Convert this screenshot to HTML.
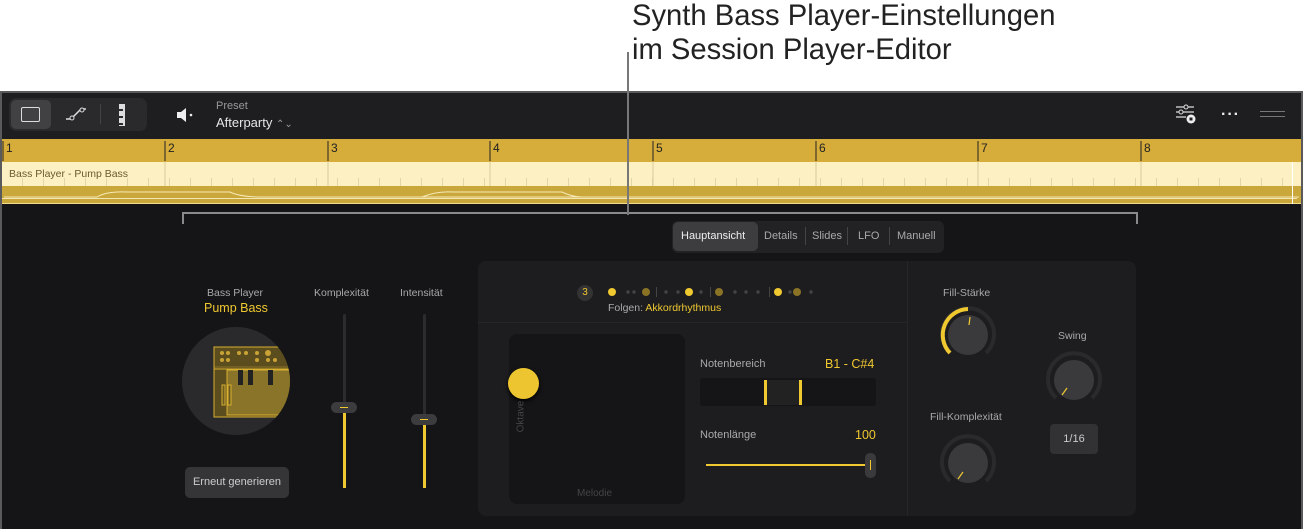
<!DOCTYPE html>
<html><head><meta charset="utf-8"><style>
*{margin:0;padding:0;box-sizing:border-box}
body{width:1303px;height:529px;background:#fff;position:relative;overflow:hidden;font-family:"Liberation Sans",sans-serif}
.a{position:absolute}
.t{color:#a9a9ab;font-size:11px}
.y{color:#f0c830}
</style></head><body>
<div class="a" style="left:632px;top:-1px;font-size:29.2px;line-height:34px;color:#222">Synth Bass Player-Einstellungen<br>im Session Player-Editor</div>
<div class="a" style="left:627px;top:52px;width:2px;height:163px;background:#777;z-index:5"></div>

<div class="a" style="left:0;top:91px;width:1303px;height:438px;background:#151517;border:2px solid #5a5a5c;border-bottom:none"></div>
<!-- toolbar -->
<div class="a" style="left:2px;top:93px;width:1299px;height:46px;background:#1e1e20"></div>
<div class="a" style="left:9px;top:98px;width:138px;height:33px;background:#2a2a2c;border-radius:7px"></div>
<div class="a" style="left:11px;top:100px;width:40px;height:29px;background:#414144;border-radius:5px"></div>
<div class="a" style="left:21px;top:107px;width:19px;height:15px;border:1.5px solid #ddd;border-radius:2px"></div>
<svg class="a" style="left:63px;top:104px" width="28" height="20"><path d="M3 15h5l10-10h5" stroke="#ddd" stroke-width="1.5" fill="none"/><circle cx="9" cy="14" r="2" fill="#2a2a2c" stroke="#ddd"/><circle cx="19" cy="6" r="2" fill="#2a2a2c" stroke="#ddd"/></svg>
<div class="a" style="left:100px;top:104px;width:1px;height:20px;background:#444"></div>
<div class="a" style="left:119px;top:104px;width:6px;height:22px;border-right:2px solid #ddd;background:repeating-linear-gradient(#ddd 0 5px,transparent 5px 7px)"></div>
<svg class="a" style="left:175px;top:106px" width="20" height="18"><path d="M2 6h4l5-4v14l-5-4H2z" fill="#eee"/><circle cx="16" cy="9" r="1.3" fill="#eee"/></svg>
<div class="a t" style="left:216px;top:100px;font-size:11px;color:#999">Preset</div>
<div class="a" style="left:216px;top:115px;font-size:13px;color:#e6e6e6">Afterparty <span style="font-size:10px;color:#999">⌃⌄</span></div>
<svg class="a" style="left:1174px;top:104px" width="24" height="20"><path d="M2 3h18M2 8h18M2 13h10" stroke="#ddd" stroke-width="1.3"/><circle cx="12" cy="3" r="2" fill="#1e1e20" stroke="#ddd"/><circle cx="7" cy="8" r="2" fill="#1e1e20" stroke="#ddd"/><circle cx="17" cy="15" r="4.5" fill="#eee"/><rect x="15.5" y="13.5" width="3" height="3" fill="#1e1e20"/></svg>
<div class="a" style="left:1221px;top:106px;color:#eee;font-size:16px;letter-spacing:1px;font-weight:bold">···</div>
<div class="a" style="left:1260px;top:111px;width:25px;height:6px;border-top:1px solid #777;border-bottom:1px solid #777"></div>
<!-- ruler -->
<div class="a" style="left:2px;top:139px;width:1299px;height:23px;background:#d6ad3a"></div>
<div class="a" style="left:2px;top:162px;width:1299px;height:24px;background:#fdf1c4"></div>
<div class="a" style="left:2px;top:186px;width:1299px;height:18px;background:#c9a73b;border-bottom:1px solid #f0dc8a"></div>
<div class="a" style="left:9px;top:168px;font-size:10.5px;color:#6b5a2a">Bass Player - Pump Bass</div>
<div class="a" style="left:2px;top:178px;width:1295px;height:8px;background:repeating-linear-gradient(90deg,transparent 0 20px,#e3d7a8 20px 21px)"></div>
<div class="a" style="left:2px;top:198px;width:1295px;height:1px;background:#f3e6b0"></div>
<svg class="a" style="left:2px;top:139px" width="1299" height="66">
<g stroke="#222" stroke-width="1">
<line x1="1" y1="2" x2="1" y2="22"/><line x1="163" y1="2" x2="163" y2="22"/><line x1="326" y1="2" x2="326" y2="22"/><line x1="488" y1="2" x2="488" y2="22"/><line x1="651" y1="2" x2="651" y2="22"/><line x1="814" y1="2" x2="814" y2="22"/><line x1="976" y1="2" x2="976" y2="22"/><line x1="1139" y1="2" x2="1139" y2="22"/></g>
<g stroke="#d8cb9a" stroke-width="1"><line x1="163" y1="23" x2="163" y2="47"/><line x1="326" y1="23" x2="326" y2="47"/><line x1="488" y1="23" x2="488" y2="47"/><line x1="651" y1="23" x2="651" y2="47"/><line x1="814" y1="23" x2="814" y2="47"/><line x1="976" y1="23" x2="976" y2="47"/><line x1="1139" y1="23" x2="1139" y2="47"/></g>
<g font-size="12" fill="#222"><text x="4" y="13">1</text><text x="166" y="13">2</text><text x="329" y="13">3</text><text x="491" y="13">4</text><text x="654" y="13">5</text><text x="817" y="13">6</text><text x="979" y="13">7</text><text x="1142" y="13">8</text></g>
<path d="M2 58H95Q105 52 125 53H228Q238 58 260 58H1297" stroke="#f6e9b5" fill="none"/>
<path d="M328 58H420Q435 52 450 53H560Q570 58 580 58" stroke="#f6e9b5" fill="none"/>
</svg>
<div class="a" style="left:1292px;top:162px;width:10px;height:42px;border-left:1px solid #fff"></div>
<!-- bracket -->
<div class="a" style="left:182px;top:212px;width:956px;height:12px;border:2px solid #8a8a8c;border-bottom:none"></div>
<!-- tabs -->
<div class="a" style="left:672px;top:221px;width:272px;height:32px;background:#222224;border-radius:6px"></div>
<div class="a" style="left:673px;top:222px;width:85px;height:29px;background:#3d3d40;border-radius:5px"></div>
<div class="a" style="left:681px;top:230px;font-size:11px;color:#eee">Hauptansicht</div>
<div class="a t" style="left:764px;top:230px">Details</div>
<div class="a t" style="left:812px;top:230px">Slides</div>
<div class="a t" style="left:858px;top:230px">LFO</div>
<div class="a t" style="left:897px;top:230px">Manuell</div>
<div class="a" style="left:805px;top:227px;width:1px;height:18px;background:#444"></div>
<div class="a" style="left:847px;top:227px;width:1px;height:18px;background:#444"></div>
<div class="a" style="left:889px;top:227px;width:1px;height:18px;background:#444"></div>
<!-- left section -->
<div class="a t" style="left:207px;top:287px;font-size:10.5px">Bass Player</div>
<div class="a y" style="left:204px;top:301px;font-size:12.5px">Pump Bass</div>
<div class="a" style="left:182px;top:327px;width:108px;height:108px;border-radius:50%;background:#2a2a2c;overflow:hidden">
<svg width="108" height="108"><g stroke="#d8b030" fill="#6b5a20"><rect x="32" y="20" width="80" height="70" fill="#5b4d1e"/><line x1="32" y1="40" x2="112" y2="40" stroke-opacity=".4"/><line x1="32" y1="42" x2="112" y2="42"/><rect x="45" y="43" width="70" height="45" fill="#8a742a"/><rect x="40" y="58" width="3" height="20"/><rect x="46" y="58" width="3" height="20"/></g>
<g fill="#c9a335"><circle cx="40" cy="26" r="2"/><circle cx="46" cy="26" r="2"/><circle cx="40" cy="33" r="2"/><circle cx="46" cy="33" r="2"/><circle cx="57" cy="26" r="2"/><circle cx="64" cy="26" r="2"/><circle cx="75" cy="26" r="2"/><circle cx="86" cy="26" r="3"/><circle cx="75" cy="33" r="2"/><circle cx="86" cy="33" r="2"/><circle cx="93" cy="33" r="2"/></g>
<g fill="#222"><rect x="56" y="43" width="5" height="15"/><rect x="66" y="43" width="5" height="15"/><rect x="86" y="43" width="5" height="15"/></g></svg></div>
<div class="a" style="left:185px;top:467px;width:104px;height:31px;background:#353537;border-radius:5px;color:#ccc;font-size:11px;text-align:center;line-height:31px">Erneut generieren</div>
<div class="a t" style="left:314px;top:287px;font-size:10.5px">Komplexität</div>
<div class="a t" style="left:400px;top:287px;font-size:10.5px">Intensität</div>
<div class="a" style="left:343px;top:314px;width:3px;height:174px;background:#2c2c2e;border-radius:2px"></div>
<div class="a" style="left:343px;top:408px;width:3px;height:80px;background:#f0c830"></div>
<div class="a" style="left:331px;top:402px;width:26px;height:11px;background:#3c3c3e;border-radius:6px"></div>
<div class="a" style="left:340px;top:407px;width:8px;height:1px;background:#f0c830"></div>
<div class="a" style="left:423px;top:314px;width:3px;height:174px;background:#2c2c2e;border-radius:2px"></div>
<div class="a" style="left:423px;top:420px;width:3px;height:68px;background:#f0c830"></div>
<div class="a" style="left:411px;top:414px;width:26px;height:11px;background:#3c3c3e;border-radius:6px"></div>
<div class="a" style="left:420px;top:419px;width:8px;height:1px;background:#f0c830"></div>
<!-- middle panel -->
<div class="a" style="left:478px;top:261px;width:658px;height:255px;background:#1d1d1f;border-radius:8px"></div>
<div class="a" style="left:478px;top:322px;width:429px;height:1px;background:#262628"></div>
<div class="a" style="left:907px;top:261px;width:1px;height:255px;background:#262628"></div>
<div class="a" style="left:577px;top:285px;width:16px;height:16px;border-radius:50%;background:#333;color:#f0c830;font-size:10px;text-align:center;line-height:16px">3</div>
<svg class="a" style="left:605px;top:286px" width="210" height="14"><g fill="#f0c830"><circle cx="7" cy="6" r="4"/><circle cx="84" cy="6" r="4"/><circle cx="173" cy="6" r="4"/></g><g fill="#8a7325"><circle cx="41" cy="6" r="4"/><circle cx="114" cy="6" r="4"/><circle cx="192" cy="6" r="4"/></g><g fill="#444"><circle cx="23" cy="6" r="1.7"/><circle cx="29" cy="6" r="1.7"/><circle cx="61" cy="6" r="1.7"/><circle cx="73" cy="6" r="1.7"/><circle cx="96" cy="6" r="1.7"/><circle cx="130" cy="6" r="1.7"/><circle cx="141" cy="6" r="1.7"/><circle cx="153" cy="6" r="1.7"/><circle cx="185" cy="6" r="1.7"/><circle cx="206" cy="6" r="1.7"/><rect x="51" y="1" width="1" height="10"/><rect x="105" y="1" width="1" height="10"/><rect x="164" y="1" width="1" height="10"/></g></svg>
<div class="a" style="left:608px;top:302px;font-size:10.5px;color:#aaa">Folgen: <span class="y">Akkordrhythmus</span></div>
<div class="a" style="left:509px;top:334px;width:176px;height:170px;background:#151517;border-radius:8px"></div>
<div class="a" style="left:508px;top:368px;width:31px;height:31px;border-radius:50%;background:#edc530;box-shadow:0 2px 4px #000"></div>
<div class="a" style="left:505px;top:411px;font-size:10px;color:#444;transform:rotate(-90deg)">Oktave</div>
<div class="a" style="left:577px;top:488px;font-size:10px;color:#444">Melodie</div>
<div class="a t" style="left:700px;top:358px">Notenbereich</div>
<div class="a y" style="left:825px;top:357px;font-size:12.5px">B1 - C#4</div>
<div class="a" style="left:700px;top:378px;width:176px;height:28px;background:#151517;border-radius:3px"></div>
<div class="a" style="left:764px;top:380px;width:38px;height:25px;background:#222;border-left:3px solid #f0c830;border-right:3px solid #f0c830"></div>
<div class="a t" style="left:700px;top:429px">Notenlänge</div>
<div class="a y" style="left:855px;top:428px;font-size:12.5px">100</div>
<div class="a" style="left:706px;top:464px;width:164px;height:2px;background:#f0c830"></div>
<div class="a" style="left:865px;top:453px;width:11px;height:25px;background:#3a3a3c;border-radius:5px"></div>
<div class="a" style="left:870px;top:460px;width:1px;height:10px;background:#f0c830"></div>
<!-- knobs -->
<div class="a t" style="left:943px;top:287px;font-size:10.5px">Fill-Stärke</div>
<div class="a t" style="left:1058px;top:330px;font-size:10.5px">Swing</div>
<div class="a t" style="left:930px;top:411px;font-size:10.5px">Fill-Komplexität</div>
<svg class="a" style="left:938px;top:305px" width="60" height="60"><path d="M12 48A26 26 0 1 1 48 48" stroke="#2a2a2c" stroke-width="4" fill="none"/><path d="M12 48A26 26 0 0 1 30 4" stroke="#f0c830" stroke-width="4" fill="none"/><circle cx="30" cy="30" r="20" fill="#3a3a3c"/><line x1="32" y1="12" x2="31" y2="20" stroke="#f0c830" stroke-width="1.2"/></svg>
<svg class="a" style="left:1044px;top:350px" width="60" height="60"><path d="M12 48A26 26 0 1 1 48 48" stroke="#2a2a2c" stroke-width="4" fill="none"/><circle cx="30" cy="30" r="20" fill="#3a3a3c"/><line x1="18" y1="45" x2="23" y2="38" stroke="#f0c830" stroke-width="1.2"/></svg>
<svg class="a" style="left:938px;top:433px" width="60" height="60"><path d="M12 48A26 26 0 1 1 48 48" stroke="#2a2a2c" stroke-width="4" fill="none"/><circle cx="30" cy="30" r="20" fill="#3a3a3c"/><line x1="20" y1="46" x2="25" y2="39" stroke="#f0c830" stroke-width="1.2"/></svg>
<div class="a" style="left:1050px;top:424px;width:48px;height:30px;background:#323234;border-radius:4px;color:#ccc;font-size:11px;text-align:center;line-height:30px">1/16</div>
</body></html>
